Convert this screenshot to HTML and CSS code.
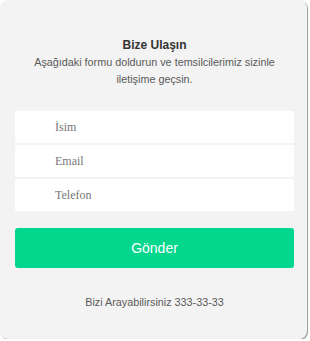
FILE: index.html
```html
<!DOCTYPE html>
<html lang="tr">
<head>
<meta charset="UTF-8">
<meta name="viewport" content="width=device-width, initial-scale=1.0">
<title>Bize Ulaşın</title>
<link rel="stylesheet" href="styles.css">
</head>
<body>
<div class="contact">
  <h2 class="title">Bize Ulaşın</h2>
  <p class="intro">Aşağıdaki formu doldurun ve temsilcilerimiz sizinle iletişime geçsin.</p>
  <form class="form">
    <div class="fields">
      <input type="text" placeholder="İsim">
      <input type="text" placeholder="Email">
      <input type="text" placeholder="Telefon">
    </div>
    <button type="button" class="send">Gönder</button>
  </form>
  <p class="phone">Bizi Arayabilirsiniz 333-33-33</p>
</div>
</body>
</html>
```

FILE: styles.css
```css
body {
  margin: 0;
  background: #fff;
  font-family: "Liberation Sans", Arial, sans-serif;
}
.contact {
  width: 307px;
  height: 339px;
  box-sizing: border-box;
  background: #f3f3f3;
  border-radius: 8px;
  box-shadow: 1px 1px 1px #9a9a9a;
  padding: 38px 13px 0 15px;
  text-align: center;
}
.title {
  margin: 0;
  font-size: 12px;
  font-weight: bold;
  color: #333;
  line-height: 15px;
}
.intro {
  margin: 1px 16px 0;
  font-size: 10.8px;
  line-height: 17px;
  color: #5a5a5a;
}
.form {
  margin-top: 23px;
}
.fields {
  display: flex;
  flex-direction: column;
  gap: 2px;
}
.fields input {
  height: 32px;
  box-sizing: border-box;
  border: none;
  border-radius: 2px;
  background: #fff;
  padding: 0 0 0 40px;
  font-family: "Liberation Serif", "Times New Roman", serif;
  font-size: 12px;
  outline: none;
}
.fields input::placeholder {
  color: #777;
}
.send {
  display: block;
  width: 100%;
  height: 40px;
  margin-top: 17px;
  border: none;
  border-radius: 3px;
  background: #03d68d;
  color: #fff;
  font-family: "Liberation Sans", Arial, sans-serif;
  font-size: 14px;
  cursor: pointer;
}
.phone {
  margin: 28px 0 0;
  font-size: 10.8px;
  color: #5a5a5a;
}
```
